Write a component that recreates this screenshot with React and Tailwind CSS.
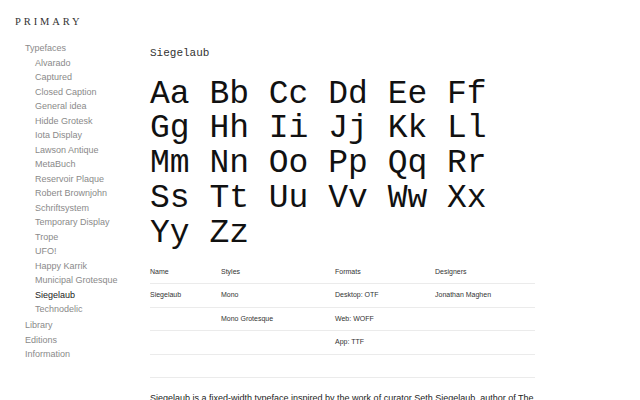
import React from "react";

const typefaces = [
  "Alvarado",
  "Captured",
  "Closed Caption",
  "General idea",
  "Hidde Grotesk",
  "Iota Display",
  "Lawson Antique",
  "MetaBuch",
  "Reservoir Plaque",
  "Robert Brownjohn",
  "Schriftsystem",
  "Temporary Display",
  "Trope",
  "UFO!",
  "Happy Karrik",
  "Municipal Grotesque",
  "Siegelaub",
  "Technodelic",
];

const pairs = "Aa Bb Cc Dd Ee Ff Gg Hh Ii Jj Kk Ll Mm Nn Oo Pp Qq Rr Ss Tt Uu Vv Ww Xx Yy Zz";

const rows = [
  ["Siegelaub", "Mono", "Desktop: OTF", "Jonathan Maghen"],
  ["", "Mono Grotesque", "Web: WOFF", ""],
  ["", "", "App: TTF", ""],
  ["", "", "", ""],
];

export default function App() {
  return (
    <div className="flex w-[640px] h-[400px] overflow-hidden bg-white font-['Liberation_Sans',Arial,sans-serif]">
      <aside className="w-[150px] shrink-0 pl-[15px] pt-[15px]">
        <div className="font-['Liberation_Serif','Times_New_Roman',serif] text-[10.5px] tracking-[2.9px] text-[#333] leading-[14px]">
          PRIMARY
        </div>
        <nav className="mt-[12px] pl-[10px] text-[9px] leading-[14.5px] text-[#8a8a8a]">
          <div>Typefaces</div>
          <div className="pl-[10px]">
            {typefaces.map((t) => (
              <div key={t} className={t === "Siegelaub" ? "text-[#222]" : ""}>
                {t}
              </div>
            ))}
          </div>
          <div className="mt-[1.5px]">Library</div>
          <div>Editions</div>
          <div>Information</div>
        </nav>
      </aside>
      <main className="w-[385px] pt-[45px]">
        <h1 className="font-['Liberation_Mono','Courier_New',monospace] text-[11px] leading-[16px] text-[#333]">
          Siegelaub
        </h1>
        <p className="mt-[16.5px] font-['Liberation_Mono','Courier_New',monospace] text-[33px] leading-[34.8px] text-[#111] break-words">
          {pairs}
        </p>
        <div className="mt-[9.5px] text-[7px] text-[#333]">
          <div className="grid grid-cols-[71px_114px_100px_100px] h-[23.5px] items-center border-b border-[#ebebeb]">
            <div>Name</div>
            <div>Styles</div>
            <div>Formats</div>
            <div>Designers</div>
          </div>
          {rows.map((r, i) => (
            <div
              key={i}
              className="grid grid-cols-[71px_114px_100px_100px] h-[23.5px] items-center border-b border-[#ebebeb]"
            >
              {r.map((c, j) => (
                <div key={j}>{c}</div>
              ))}
            </div>
          ))}
        </div>
        <p className="mt-[14px] text-[9px] leading-[13px] text-[#222] w-[392px]">
          Siegelaub is a fixed-width typeface inspired by the work of curator Seth Siegelaub, author of The
          Xerox Book.
        </p>
      </main>
    </div>
  );
}
